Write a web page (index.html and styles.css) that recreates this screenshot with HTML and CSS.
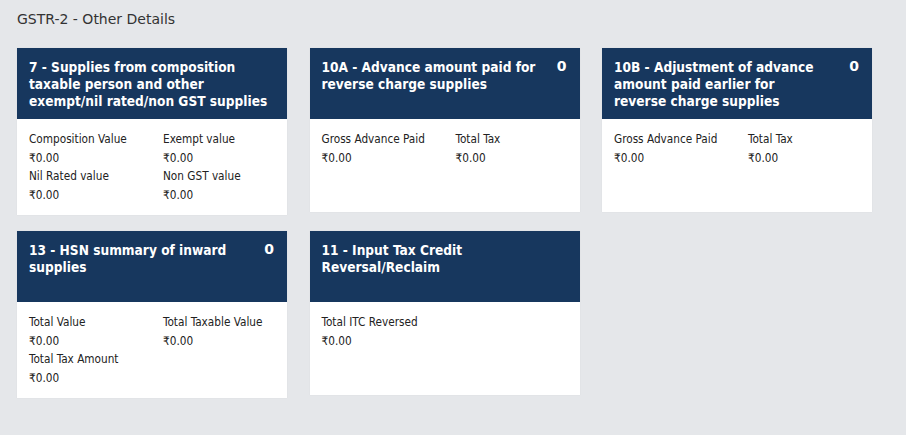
FILE: index.html
```html
<!DOCTYPE html>
<html>
<head>
<meta charset="utf-8">
<link rel="stylesheet" href="styles.css">
</head>
<body>
<div class="page">
  <h1 class="title">GSTR-2 - Other Details</h1>
  <div class="grid">
    <div class="card">
      <div class="card-head">
        <div class="card-title">7 - Supplies from composition<br>taxable person and other<br>exempt/nil rated/non GST supplies</div>
      </div>
      <div class="card-body">
        <div class="field"><div class="label">Composition Value</div><div class="value">₹0.00</div></div>
        <div class="field"><div class="label">Exempt value</div><div class="value">₹0.00</div></div>
        <div class="field"><div class="label">Nil Rated value</div><div class="value">₹0.00</div></div>
        <div class="field"><div class="label">Non GST value</div><div class="value">₹0.00</div></div>
      </div>
    </div>
    <div class="card">
      <div class="card-head">
        <div class="card-title">10A - Advance amount paid for<br>reverse charge supplies</div>
        <div class="count">0</div>
      </div>
      <div class="card-body">
        <div class="field"><div class="label">Gross Advance Paid</div><div class="value">₹0.00</div></div>
        <div class="field"><div class="label">Total Tax</div><div class="value">₹0.00</div></div>
      </div>
    </div>
    <div class="card">
      <div class="card-head">
        <div class="card-title">10B - Adjustment of advance<br>amount paid earlier for<br>reverse charge supplies</div>
        <div class="count">0</div>
      </div>
      <div class="card-body">
        <div class="field"><div class="label">Gross Advance Paid</div><div class="value">₹0.00</div></div>
        <div class="field"><div class="label">Total Tax</div><div class="value">₹0.00</div></div>
      </div>
    </div>
    <div class="card">
      <div class="card-head">
        <div class="card-title">13 - HSN summary of inward<br>supplies</div>
        <div class="count">0</div>
      </div>
      <div class="card-body">
        <div class="field"><div class="label">Total Value</div><div class="value">₹0.00</div></div>
        <div class="field"><div class="label">Total Taxable Value</div><div class="value">₹0.00</div></div>
        <div class="field"><div class="label">Total Tax Amount</div><div class="value">₹0.00</div></div>
      </div>
    </div>
    <div class="card">
      <div class="card-head">
        <div class="card-title">11 - Input Tax Credit<br>Reversal/Reclaim</div>
      </div>
      <div class="card-body">
        <div class="field"><div class="label">Total ITC Reversed</div><div class="value">₹0.00</div></div>
      </div>
    </div>
  </div>
</div>
</body>
</html>
```
FILE: styles.css
```css
html, body {
  margin: 0;
  padding: 0;
  background: #e5e7ea;
}
body {
  font-family: "DejaVu Sans", Verdana, sans-serif;
  color: #222;
  width: 906px;
  height: 435px;
  overflow: hidden;
}
.page {
  padding: 10px 17px 0 17px;
}
.title {
  margin: 0;
  font-size: 14px;
  font-weight: normal;
  line-height: 18px;
  color: #333;
  height: 38px;
}
.grid {
  display: grid;
  grid-template-columns: 270px 270px 270px;
  column-gap: 22.5px;
  row-gap: 16px;
  align-items: start;
}
.card {
  background: #fff;
  box-shadow: 0 0 1px rgba(0,0,0,0.08);
}
.card-head {
  background: #17375e;
  color: #fff;
  height: 71px;
  box-sizing: border-box;
  padding: 11px 13px 0 12px;
  display: flex;
  justify-content: space-between;
  align-items: flex-start;
}
.card-title {
  font-family: "DejaVu Sans Condensed", "DejaVu Sans", sans-serif;
  font-size: 13.6px;
  font-weight: bold;
  line-height: 17px;
  white-space: nowrap;
}
.count {
  font-size: 14px;
  font-weight: bold;
  line-height: 17px;
  margin-top: -1px;
}
.card-body {
  box-sizing: border-box;
  min-height: 93px;
  padding: 11px 12px 11px 12px;
  display: grid;
  grid-template-columns: 134px 1fr;
  font-family: "DejaVu Sans Condensed", "DejaVu Sans", sans-serif;
  font-size: 11.7px;
  color: #222;
}
.label {
  line-height: 18px;
}
.value {
  line-height: 18px;
  margin-top: 1px;
}
```
